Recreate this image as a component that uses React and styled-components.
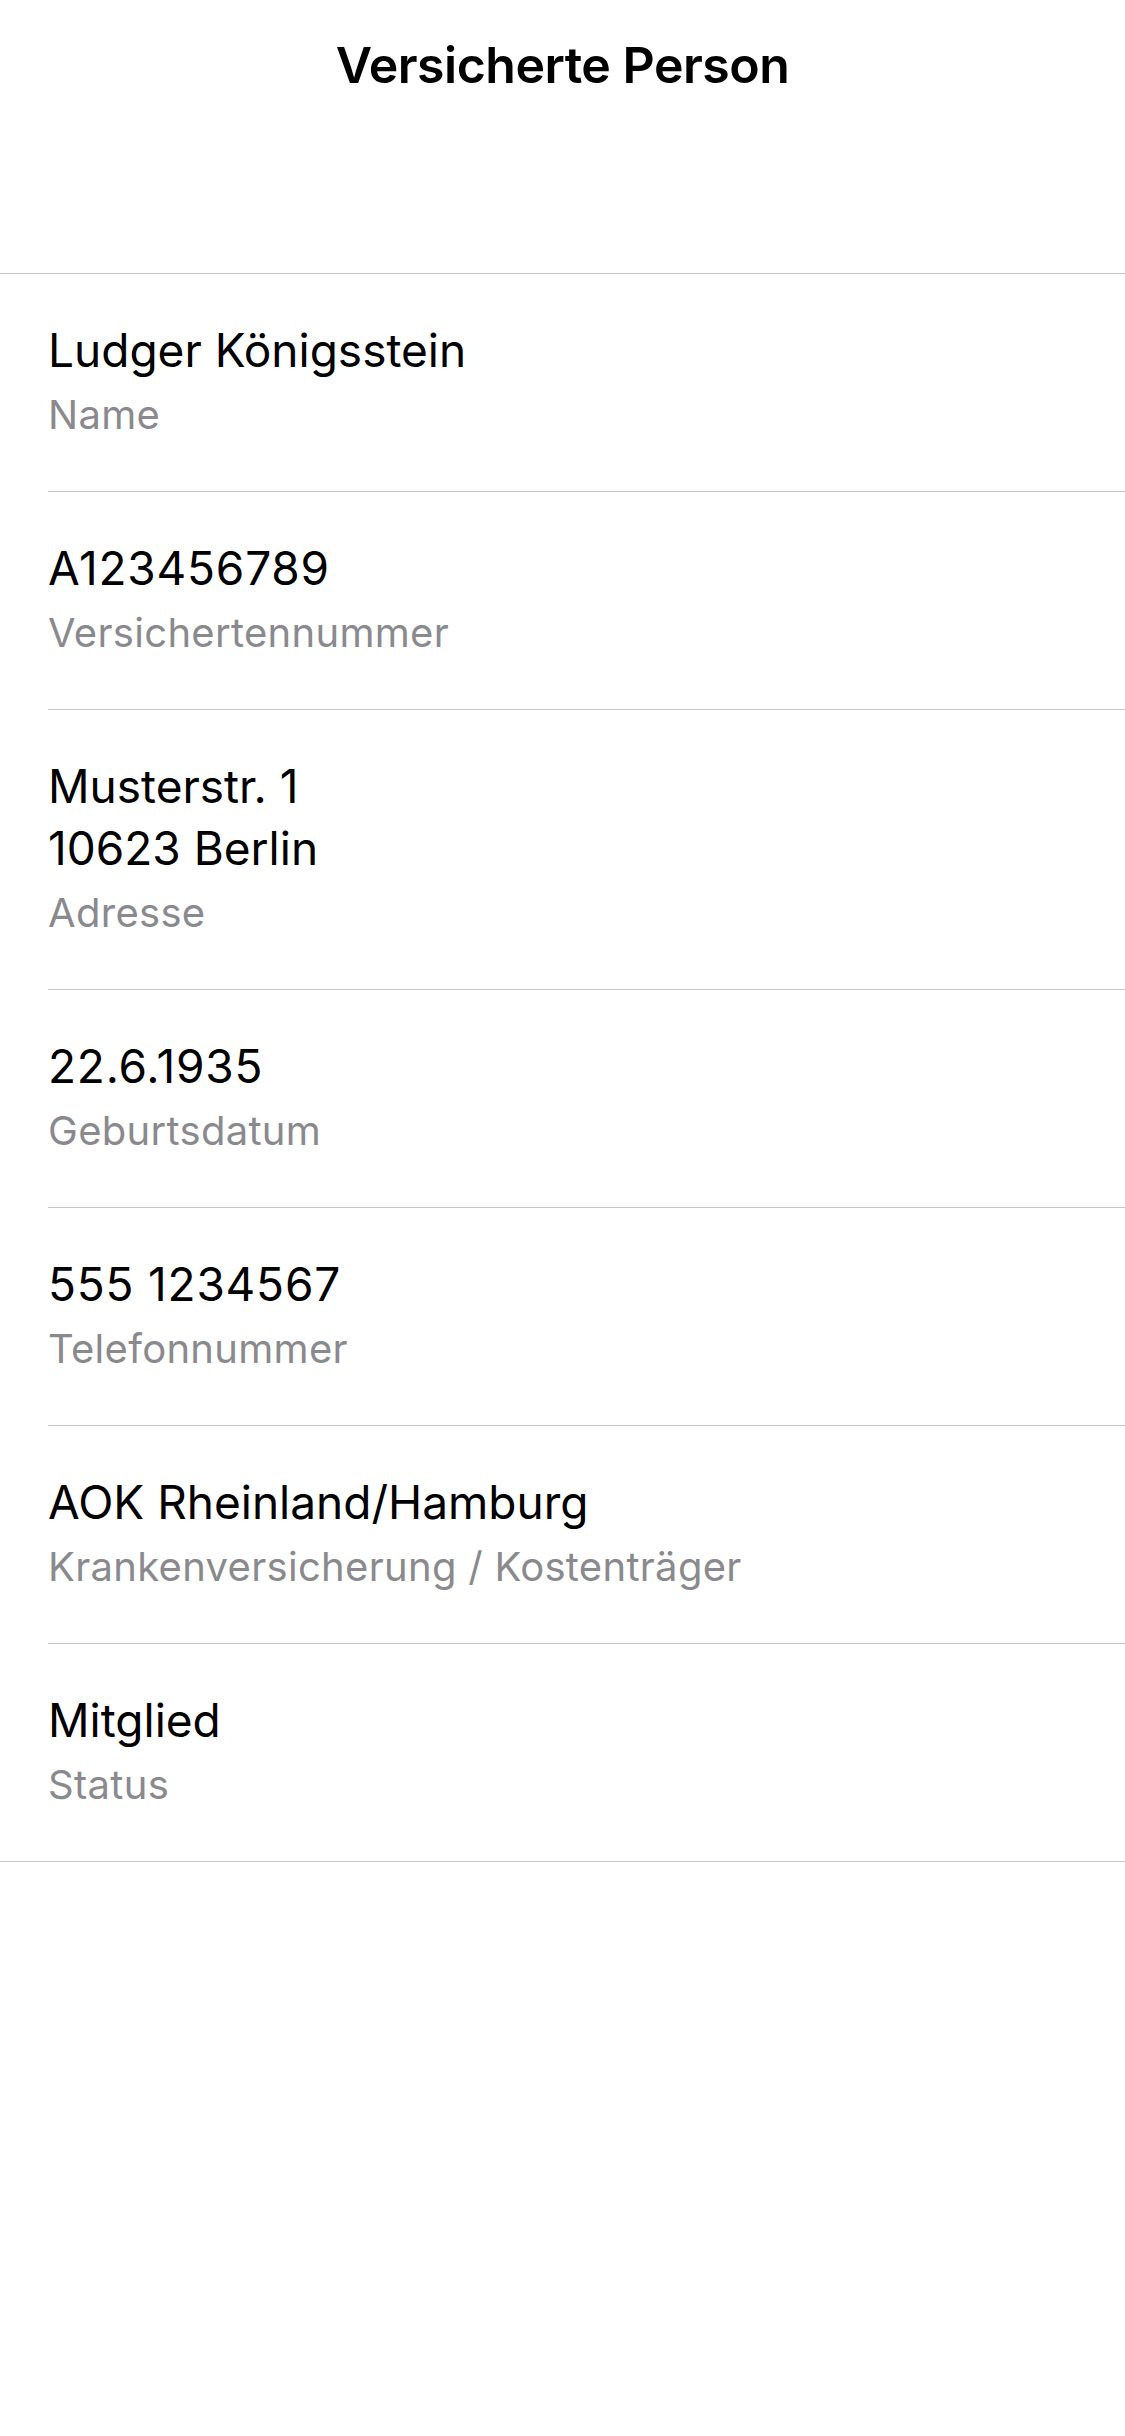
import React from "react";
import styled, { createGlobalStyle } from "styled-components";

/**
 * Page reset
 */
const GlobalStyle = createGlobalStyle`
	html, body {
		margin: 0;
		padding: 0;
		background: #ffffff;
	}
	body {
		font-family: Inter, "Noto Sans", sans-serif;
		-webkit-font-smoothing: antialiased;
	}
`;

/**
 * The screen
 */
const Screen = styled.div`
	width: 1125px;
	min-height: 2436px;
	background: #ffffff;
`;

/**
 * The navigation header
 */
const Header = styled.header`
	height: 273px;
	box-sizing: border-box;
	padding-top: 35px;
	text-align: center;
`;

const Title = styled.h1`
	margin: 0;
	font-size: 50px;
	line-height: 60px;
	font-weight: 600;
	color: #000000;
	letter-spacing: -0.5px;
`;

/**
 * The list of fields
 */
const List = styled.ul`
	list-style: none;
	margin: 0;
	padding: 0;
	border-top: 1px solid #c8c7cc;
	border-bottom: 1px solid #c8c7cc;
`;

const Row = styled.li`
	padding-left: 48px;
`;

const RowInner = styled.div`
	padding: 45px 0 42px;
	border-bottom: ${props => (props.$last ? "none" : "1px solid #c8c7cc")};
`;

/**
 * Digits in the reference font run wider than in Inter, so numeric values get a little tracking
 */
const Value = styled.div`
	font-size: 46px;
	line-height: 62px;
	color: #000000;
	letter-spacing: ${props => (props.$numeric ? "0.8px" : "0")};
	white-space: pre-line;
`;

const Label = styled.div`
	font-size: 40px;
	line-height: 68px;
	letter-spacing: 0.3px;
	color: #8a8a8e;
`;

const fields = [
	{ value: "Ludger Königsstein", label: "Name" },
	{ value: "A123456789", label: "Versichertennummer", numeric: true },
	{ value: "Musterstr. 1\n10623 Berlin", label: "Adresse" },
	{ value: "22.6.1935", label: "Geburtsdatum", numeric: true },
	{ value: "555 1234567", label: "Telefonnummer", numeric: true },
	{ value: "AOK Rheinland/Hamburg", label: "Krankenversicherung / Kostenträger" },
	{ value: "Mitglied", label: "Status" },
];

export default function App() {
	return (
		<Screen>
			<GlobalStyle />
			<Header>
				<Title>Versicherte Person</Title>
			</Header>
			<List>
				{fields.map((field, i) => (
					<Row key={field.label}>
						<RowInner $last={i === fields.length - 1}>
							<Value $numeric={field.numeric}>{field.value}</Value>
							<Label>{field.label}</Label>
						</RowInner>
					</Row>
				))}
			</List>
		</Screen>
	);
}
